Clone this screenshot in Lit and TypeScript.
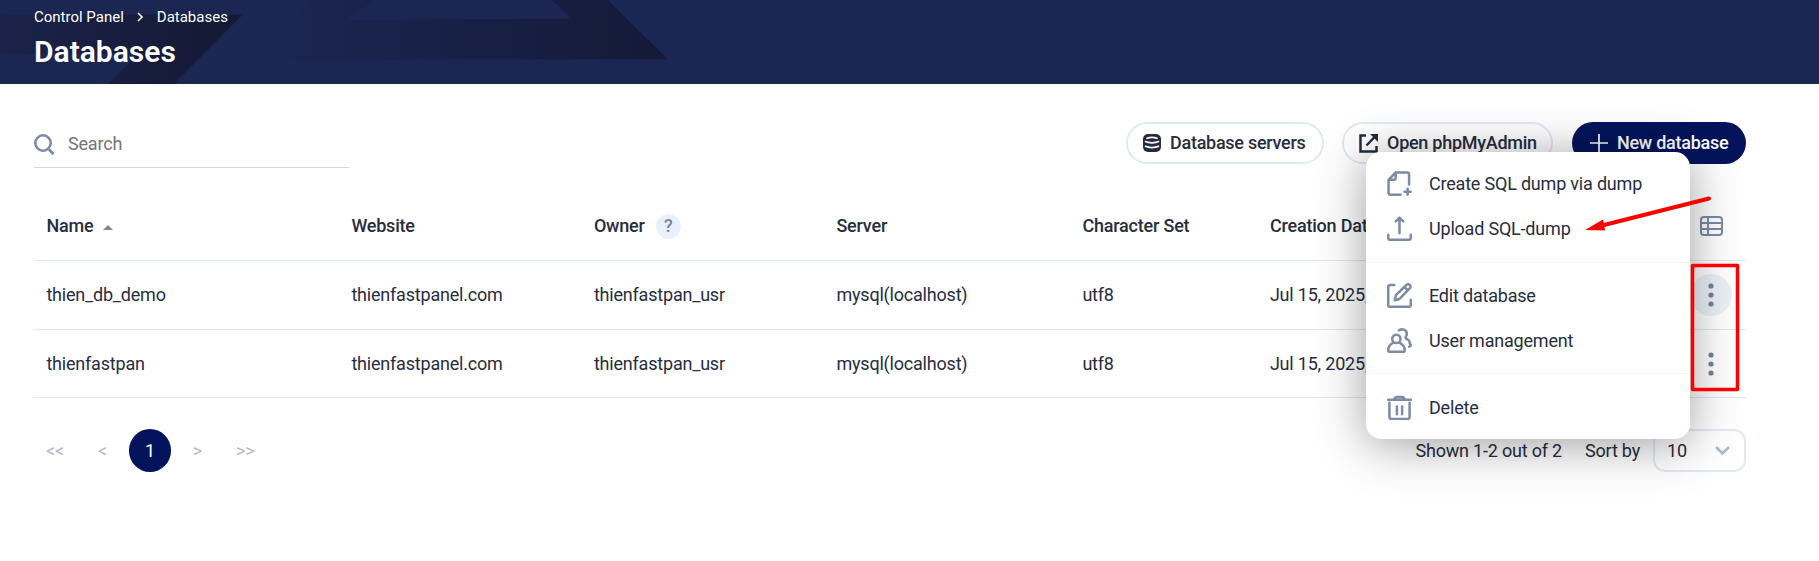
import { LitElement, html, css, svg } from "lit";
import { customElement } from "lit/decorators.js";

const ICONS = {
  dump: svg`<path d="M8.200 1.500H19.500a1.700 1.700 0 0 1 1.700 1.700V13M13 22.800H3.200A1.700 1.700 0 0 1 1.500 21V8.500L8.200 1.500M8.300 2V7a1.500 1.500 0 0 1-1.500 1.500H2M19.800 17v5.800M16.900 19.900h5.800"/>`,
  upload: svg`<path d="M12 16.500V2M8.500 5.200L12 1.600l3.500 3.600M1.200 18v3.200a1.600 1.600 0 0 0 1.600 1.600h18.400a1.600 1.600 0 0 0 1.600-1.600V18"/>`,
  edit: svg`<path d="M7 1.800H3A1.800 1.800 0 0 0 1.200 3.600v17.400A1.800 1.800 0 0 0 3 22.800h18a1.800 1.800 0 0 0 1.800-1.800V16M7.500 16.500l1-4.800L18.600 1.900a2.200 2.200 0 0 1 3.200 0 2.300 2.300 0 0 1 0 3.200L12 15.300zM16.800 4l3 3"/>`,
  users: svg`<circle cx="9" cy="10.500" r="4"/><path d="M5.800 14.200C3 15.500 1.200 18 1.200 21.300a1.500 1.500 0 0 0 1.500 1.500h12.800a1.500 1.500 0 0 0 1.500-1.500c0-3.300-2-5.800-4.800-7.100M11.500 2.300c3-2 7-.7 7.500 2.700.2 1.300-.1 2.300-.8 3.200-.7 1-.2 1.800.6 2.300 2 1 2.700 1.700 2.900 2.700.3 1.300-.2 1.700.6 2.400 1 1 .2 2.200-1 2.400"/>`,
  trash: svg`<path d="M1 4.600h22M7 4.300c.4-1.700 1.200-2.500 2.500-2.500h5c1.300 0 2.100.8 2.500 2.500M2.300 7.500v13.500a2 2 0 0 0 2 2h15.400a2 2 0 0 0 2-2V7.500M9.500 11v7.500M14.500 11v7.500"/>`,
};

@customElement("app-root")
export class AppRoot extends LitElement {
  static styles = css`
    :host { display: block; position: relative; width: 100%; height: 561px; overflow: hidden; background: #fff; color: #272d3e; font: 400 18px/24px Roboto, sans-serif; letter-spacing: -0.2px; }
    * { box-sizing: border-box; }
    svg { display: block; flex: none; }
    .header { position: relative; height: 84px; background: #1b2653; color: #fff; padding: 6px 34px 0; overflow: hidden; letter-spacing: 0; }
    .art { position: absolute; inset: 0; }
    .crumbs { position: relative; display: flex; align-items: center; font-size: 15px; line-height: 22px; }
    .crumbs svg { margin: 0 13px; }
    h1 { position: relative; margin: 6px 0 0; font-size: 30px; line-height: 36px; font-weight: 600; }
    main { width: 1712px; margin-left: 34px; padding-top: 38px; }
    .toolbar { display: flex; justify-content: space-between; }
    .search { display: flex; align-items: center; gap: 13px; width: 315px; height: 46px; padding-bottom: 1px; border-bottom: 1px solid #cfdbe8; color: #757575; }
    .actions { display: flex; gap: 18px; }
    .btn { display: flex; align-items: center; height: 42px; border: 2px solid #e0eaf5; border-radius: 21px; font-weight: 500; letter-spacing: -0.27px; padding: 0 15px; gap: 9px; white-space: nowrap; }
    .servers { width: 198px; }
    .pma { width: 211px; padding-left: 15px; }
    .new { width: 174px; color: #fff; background: #03145c; border: 0; padding-left: 18px; margin-left: 1px; }
    .row { display: grid; grid-template-columns: 305px 242.500px 242.500px 246px 187.500px 1fr 70px; align-items: center; height: 68px; border-bottom: 1px solid #e0e8f4; padding-left: 12.400px; }
    .head { height: 69px; margin-top: 24px; font-weight: 500; }
    .first { height: 69px; }
    .cell { display: flex; align-items: center; }
    .end { justify-content: center; }
    .sort { margin: 3px 0 0 10px; }
    .help { display: grid; place-items: center; width: 25px; height: 25px; margin-left: 11px; border-radius: 50%; background: #e9f0f9; color: #76849e; }
    .dots { display: grid; place-items: center; width: 42px; height: 42px; border-radius: 50%; }
    .dots.on { background: #ecf1f8; }
    .footer { display: flex; align-items: center; height: 43px; margin-top: 31px; }
    .pages { display: flex; align-items: center; color: #b3b9c6; flex: 1; padding-left: 12px; }
    .page { width: 42px; height: 43px; border-radius: 22px; background: #03145c; color: #fff; display: grid; place-items: center; margin: 0 22px 0 22px; }
    .gap { margin-right: 34px; }
    .sortby { margin-left: 23px; }
    .select { display: flex; align-items: center; justify-content: space-between; width: 93px; height: 43px; border: 2px solid #e0eaf5; border-radius: 12px; padding: 0 14px 0 12px; margin-left: 13px; }
    .menu { position: absolute; left: 1366px; top: 152px; width: 324px; height: 287px; border-radius: 15px; background: #fff; box-shadow: 0 5px 50px rgba(0,0,0,.39); padding-top: 9px; }
    .item { display: flex; align-items: center; height: 45px; padding-left: 21px; gap: 17px; }
    .item svg { fill: none; stroke: #7c8ba7; stroke-width: 2.400; stroke-linecap: round; stroke-linejoin: round; }
    .line { height: 1px; background: #f1f4f8; margin: 11px 0 10px; }
    .line.last { margin: 10px 0 11px; }
    .mark { position: absolute; left: 0; top: 0; }
  `;

  private row(name: string, first: boolean) {
    const cells = [name, "thienfastpanel.com", "thienfastpan_usr", "mysql(localhost)", "utf8", "Jul 15, 2025, 09:10"];
    return html`<div class="row ${first ? "first" : ""}">
      ${cells.map((c) => html`<div class="cell">${c}</div>`)}
      <div class="cell end"><div class="dots ${first ? "on" : ""}">
        <svg width="6" height="24" fill="#73829e"><circle cx="3" cy="3" r="2.600"/><circle cx="3" cy="12" r="2.600"/><circle cx="3" cy="21" r="2.600"/></svg>
      </div></div>
    </div>`;
  }

  private item(icon: keyof typeof ICONS, label: string) {
    return html`<div class="item"><svg width="25" height="25" viewBox="0 0 24 24">${ICONS[icon]}</svg><span>${label}</span></div>`;
  }

  render() {
    return html`
      <header class="header">
        <svg class="art" width="1819" height="84">
          <defs>
            <linearGradient id="a" gradientUnits="userSpaceOnUse" x1="0" y1="0" x2="200" y2="0"><stop stop-color="#1b234a"/><stop offset="1" stop-color="#151a37"/></linearGradient>
            <linearGradient id="b" gradientUnits="userSpaceOnUse" x1="260" y1="0" x2="660" y2="0"><stop stop-color="#1b2653"/><stop offset="1" stop-color="#141a38"/></linearGradient>
          </defs>
          <path d="M0 14.500H243L174 84H108L138 54H0z" fill="url(#a)"/>
          <path d="M310 0H376L346 20L571 18.500L552 0H608L668 59.500H262z" fill="url(#b)"/>
        </svg>
        <div class="crumbs"><span>Control Panel</span><svg width="7" height="10" fill="none" stroke="#fff" stroke-width="1.600"><path d="M1 1l4 4-4 4"/></svg><span>Databases</span></div>
        <h1>Databases</h1>
      </header>
      <main>
        <div class="toolbar">
          <div class="search"><svg width="21" height="21" fill="none" stroke="#7a8aa8" stroke-width="2.500"><circle cx="9" cy="9" r="7.700"/><path d="M15 15.500l4.500 4.500" stroke-width="3"/></svg><span>Search</span></div>
          <div class="actions">
            <div class="btn servers"><svg width="18" height="18" viewBox="0 0 18 18"><rect width="18" height="18" rx="5" fill="#252b3f"/><g fill="none" stroke="#fff" stroke-width="1.700" stroke-linecap="round"><path d="M4 4.200c3-1 7-1 10 0"/><path d="M2.500 7.500c3 1.700 10 1.700 13 0M2.500 12.300c3 1.700 10 1.700 13 0"/></g></svg><span>Database servers</span></div>
            <div class="btn pma"><svg width="19" height="19" fill="none" stroke="#252b3f" stroke-width="2.500"><path d="M7 1.500H1.500v16H17.500V12M16.500 2L7.500 11.500"/><path d="M11 0h8v8z" fill="#252b3f" stroke="none"/></svg><span>Open phpMyAdmin</span></div>
            <div class="btn new"><svg width="18" height="18" stroke="#fff" stroke-width="1.700"><path d="M9 0v18M0 9h18"/></svg><span>New database</span></div>
          </div>
        </div>
        <div class="row head">
          <div class="cell">Name<svg class="sort" width="10" height="5" fill="#7b88a0"><path d="M5 0l5 5H0z"/></svg></div>
          <div class="cell">Website</div><div class="cell">Owner<span class="help">?</span></div>
          <div class="cell">Server</div><div class="cell">Character Set</div><div class="cell">Creation Date</div>
          <div class="cell end"><svg width="23" height="20" fill="none" stroke="#7c8ba3" stroke-width="2"><rect x="1" y="1" width="21" height="18" rx="3"/><path d="M1 7h21M1 13h21M8 1v18"/></svg></div>
        </div>
        ${this.row("thien_db_demo", true)}
        ${this.row("thienfastpan", false)}
        <div class="footer">
          <div class="pages"><span class="gap">&lt;&lt;</span><span>&lt;</span><span class="page">1</span><span class="gap">&gt;</span><span>&gt;&gt;</span></div>
          <span>Shown 1-2 out of 2</span><span class="sortby">Sort by</span>
          <div class="select"><span>10</span><svg width="15" height="10" fill="none" stroke="#a8b9d4" stroke-width="2.500"><path d="M1 1l6.500 6.500L14 1"/></svg></div>
        </div>
      </main>
      <div class="menu">
        ${this.item("dump", "Create SQL dump via dump")}
        ${this.item("upload", "Upload SQL-dump")}
        <div class="line"></div>
        ${this.item("edit", "Edit database")}
        ${this.item("users", "User management")}
        <div class="line last"></div>
        ${this.item("trash", "Delete")}
      </div>
      <svg class="mark" width="1819" height="561" fill="none" stroke="#fe0000">
        <rect x="1692.500" y="265.500" width="45" height="124" stroke-width="3.500" stroke-linejoin="round"/>
        <path d="M1709 198.500L1600 226" stroke-width="4" stroke-linecap="round"/>
        <path d="M1585 230l18-10.500 2 11z" fill="#fe0000" stroke="none"/>
      </svg>
    `;
  }
}
